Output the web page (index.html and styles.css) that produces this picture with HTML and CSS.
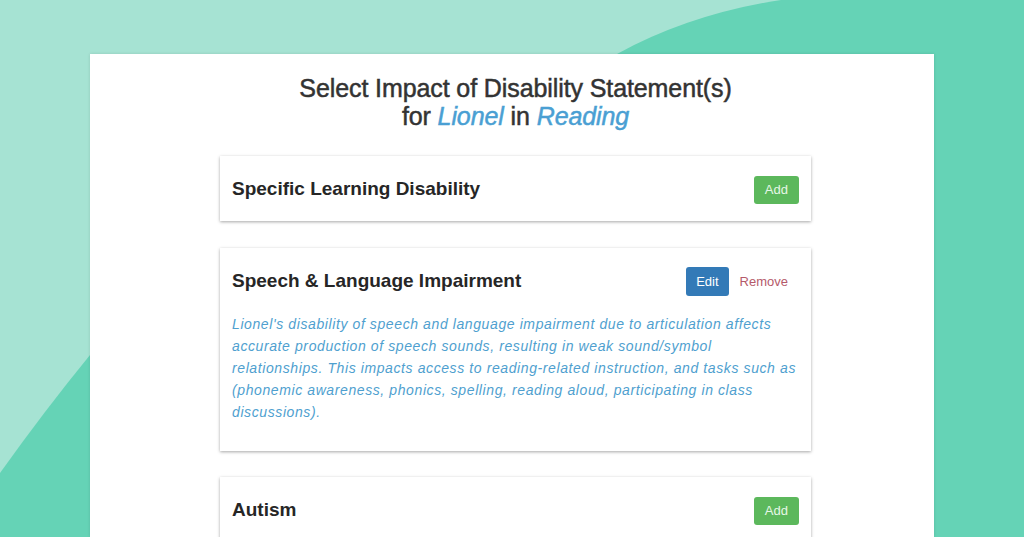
FILE: index.html
```html
<!DOCTYPE html>
<html>
<head>
<meta charset="utf-8">
<link rel="stylesheet" href="styles.css">
</head>
<body>
<svg class="bg" viewBox="0 0 1024 537" preserveAspectRatio="none" aria-hidden="true">
  <rect width="1024" height="537" fill="#a6e3d3"/>
  <path d="M0 473 Q45 410 90 355 L617 54 Q690 14 781 0 L1024 0 L1024 537 L0 537 Z" fill="#65d3b6"/>
</svg>
<main class="panel">
  <h1 class="title">Select Impact of Disability Statement(s)<br>for <em>Lionel</em> in <em>Reading</em></h1>
  <section class="card">
    <div class="card-head">
      <h2>Specific Learning Disability</h2>
      <div class="actions"><button class="btn btn-add">Add</button></div>
    </div>
  </section>
  <section class="card card-open">
    <div class="card-head">
      <h2>Speech &amp; Language Impairment</h2>
      <div class="actions"><button class="btn btn-edit">Edit</button><button class="link-remove">Remove</button></div>
    </div>
    <p class="statement">Lionel's disability of speech and language impairment due to articulation affects accurate production of speech sounds, resulting in weak sound/symbol relationships. This impacts access to reading-related instruction, and tasks such as (phonemic awareness, phonics, spelling, reading aloud, participating in class discussions).</p>
  </section>
  <section class="card">
    <div class="card-head">
      <h2>Autism</h2>
      <div class="actions"><button class="btn btn-add">Add</button></div>
    </div>
  </section>
</main>
</body>
</html>
```
FILE: styles.css
```css
html, body {
  margin: 0;
  padding: 0;
  width: 1024px;
  height: 537px;
  overflow: hidden;
  font-family: "Liberation Sans", Arial, sans-serif;
}
body {
  position: relative;
  background: #a6e3d3;
}
.bg {
  position: absolute;
  left: 0;
  top: 0;
  width: 1024px;
  height: 537px;
  z-index: 0;
}
.panel {
  position: relative;
  z-index: 1;
  margin: 54px 0 0 90px;
  width: 844px;
  height: 483px;
  overflow: hidden;
  background: #fff;
  box-shadow: 0 0 3px rgba(0,0,0,0.12);
  box-sizing: border-box;
  padding: 20px 123px 0 130px;
  display: flex;
  flex-direction: column;
  gap: 26px;
}
.title {
  margin: 0;
  text-align: center;
  font-size: 25px;
  line-height: 28px;
  font-weight: 400;
  color: #333;
  -webkit-text-stroke: 0.5px #333;
  letter-spacing: -0.1px;
}
.title em {
  color: #4a9fd3;
  -webkit-text-stroke: 0.5px #4a9fd3;
}
.card {
  flex: none;
  background: #fff;
  box-shadow: 0 1px 3px rgba(0,0,0,0.35);
  padding: 0 12px;
}
.card-open {
  margin-top: 1px;
}
.card-head {
  height: 65px;
  display: flex;
  align-items: center;
  justify-content: space-between;
}
.card-head h2 {
  margin: 0;
  font-size: 19px;
  font-weight: 700;
  color: #262626;
}
.actions {
  display: flex;
  align-items: center;
  gap: 11px;
}
.btn {
  border: none;
  border-radius: 3px;
  color: #fff;
  font-family: "Liberation Sans", Arial, sans-serif;
  font-size: 13px;
  height: 28px;
  padding: 0 11px;
  margin-top: 2px;
}
.btn-add {
  background: #5cb85c;
  color: #e6f6e6;
}
.btn-edit {
  background: #337ab7;
  height: 29px;
  padding: 0 10px;
}
.link-remove {
  background: none;
  border: none;
  font-family: "Liberation Sans", Arial, sans-serif;
  font-size: 13px;
  color: #b55a6a;
  padding: 0 11px 0 0;
  margin-top: 2px;
}
.statement {
  margin: 0 -6px 28px 0;
  font-style: italic;
  font-size: 14px;
  line-height: 22px;
  letter-spacing: 0.6px;
  color: #4f9fcf;
}
```
